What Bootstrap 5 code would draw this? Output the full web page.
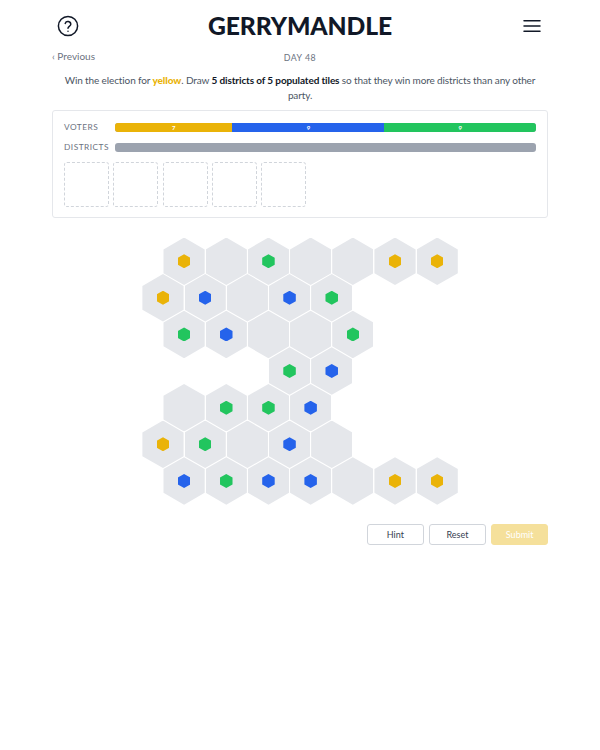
<!DOCTYPE html>
<html lang="en">
<head>
<meta charset="utf-8">
<title>Gerrymandle</title>
<link href="https://cdn.jsdelivr.net/npm/bootstrap@5.3.0/dist/css/bootstrap.min.css" rel="stylesheet">
<style>
body { font-family: Lato, "Noto Sans", sans-serif; color: #4b5563; background: #fff; }
.shell { width: 496px; margin: 0 auto; }
.top-bar { height: 46px; padding: 6px 4px 0 4px; }
.game-title { font-size: 24.7px; font-weight: 900; color: #111827; margin: 0; line-height: 40px; letter-spacing: -.1px; }
.sub-bar { height: 21px; font-size: 10px; position: relative; }
.prev-link { color: #6b7280; text-decoration: none; font-size: 10px; line-height: 20px; }
.day-label { position: absolute; left: 0; right: 0; text-align: center; top: 1.5px; font-size: 8.8px; letter-spacing: .5px; color: #6b7280; line-height: 20px; pointer-events: none; }
.intro { font-size: 10px; letter-spacing: -.12px; line-height: 14.5px; text-align: center; margin: 6px 0 8px; padding: 0 8px; color: #4b5563; }
.intro b { color: #111827; font-weight: 700; }
.intro strong { color: #eab308; font-weight: 900; }
.tally { border: 1px solid #e5e7eb; border-radius: 3px; padding: 12px 11px 11px; height: 108px; }
.tally-row { height: 9px; margin-bottom: 10.5px; }
.tally-label { width: 51px; flex: none; font-size: 8.3px; letter-spacing: .5px; color: #6b7280; line-height: 9px; }
.bar-track { flex: 1; height: 9px; border-radius: 3px; overflow: hidden; background: #9ca3af; display: flex; font-size: 6px; line-height: 9px; color: #fff; text-align: center; font-weight: 700; }
.seg-y { background: #eab308; }
.seg-b { background: #2563eb; }
.seg-g { background: #22c55e; }
.slots { gap: 4.3px; margin-top: -.5px; }
.slot { width: 45px; height: 45px; border: 1px dashed #d1d5db; border-radius: 3px; }
.board { margin-top: 19.5px; margin-left: 90.4px; }
.hex-row { display: flex; gap: 1px; height: 47.5px; margin-bottom: -10.9px; }
.hex-row.shifted { margin-left: 21.1px; }
.hex, .hex-gap { width: 41.2px; height: 47.5px; flex: none; }
.hex { background: #e5e7eb; clip-path: polygon(50% 0, 100% 25%, 100% 75%, 50% 100%, 0 75%, 0 25%); display: flex; align-items: center; justify-content: center; }
.pip { width: 12.5px; height: 14px; clip-path: polygon(50% 0, 100% 25%, 100% 75%, 50% 100%, 0 75%, 0 25%); }
.actions { margin-top: 30px; gap: 5.5px; }
.act-btn { width: 56.7px; height: 21px; padding: 0; font-size: 9px; line-height: 19px; border-radius: 3px; border: 1px solid #d1d5db; background: #fff; color: #374151; }
.act-btn.go { background: #f5e09b; border-color: #f5e09b; color: #fff; opacity: 1; }
</style>
</head>
<body>
<div class="shell">
  <header class="top-bar d-flex align-items-center justify-content-between">
    <svg width="24" height="24" viewBox="0 0 24 24" fill="none" stroke="#111827" stroke-width="1.5" stroke-linecap="round" stroke-linejoin="round" aria-label="Help"><circle cx="12" cy="12" r="9.6"/><path d="M9.2 9.4a2.9 2.9 0 0 1 5.6 .9c0 1.9-2.8 2.3-2.8 3.9"/><path d="M12 17.2v.1"/></svg>
    <h1 class="game-title">GERRYMANDLE</h1>
    <svg width="24" height="24" viewBox="0 0 24 24" fill="none" stroke="#111827" stroke-width="1.5" stroke-linecap="round" aria-label="Menu"><path d="M4 6.8h16M4 12h16M4 17.2h16"/></svg>
  </header>
  <div class="sub-bar d-flex">
    <a class="prev-link" href="#">‹ Previous</a>
    <div class="day-label">DAY 48</div>
  </div>
  <p class="intro">Win the election for <strong>yellow</strong>. Draw <b>5 districts of 5 populated tiles</b> so that they win more districts than any other party.</p>
  <section class="tally">
    <div class="tally-row d-flex align-items-center">
      <div class="tally-label">VOTERS</div>
      <div class="bar-track">
        <div class="seg-y" style="width:27.9%">7</div>
        <div class="seg-b" style="width:36.1%">9</div>
        <div class="seg-g" style="width:36%">9</div>
      </div>
    </div>
    <div class="tally-row d-flex align-items-center">
      <div class="tally-label">DISTRICTS</div>
      <div class="bar-track"></div>
    </div>
    <div class="slots d-flex">
      <div class="slot"></div><div class="slot"></div><div class="slot"></div><div class="slot"></div><div class="slot"></div>
    </div>
  </section>
  <div class="board">
    <div class="hex-row shifted">
      <div class="hex"><div class="pip seg-y"></div></div><div class="hex"></div><div class="hex"><div class="pip seg-g"></div></div><div class="hex"></div><div class="hex"></div><div class="hex"><div class="pip seg-y"></div></div><div class="hex"><div class="pip seg-y"></div></div>
    </div>
    <div class="hex-row">
      <div class="hex"><div class="pip seg-y"></div></div><div class="hex"><div class="pip seg-b"></div></div><div class="hex"></div><div class="hex"><div class="pip seg-b"></div></div><div class="hex"><div class="pip seg-g"></div></div>
    </div>
    <div class="hex-row shifted">
      <div class="hex"><div class="pip seg-g"></div></div><div class="hex"><div class="pip seg-b"></div></div><div class="hex"></div><div class="hex"></div><div class="hex"><div class="pip seg-g"></div></div>
    </div>
    <div class="hex-row">
      <div class="hex-gap"></div><div class="hex-gap"></div><div class="hex-gap"></div><div class="hex"><div class="pip seg-g"></div></div><div class="hex"><div class="pip seg-b"></div></div>
    </div>
    <div class="hex-row shifted">
      <div class="hex"></div><div class="hex"><div class="pip seg-g"></div></div><div class="hex"><div class="pip seg-g"></div></div><div class="hex"><div class="pip seg-b"></div></div>
    </div>
    <div class="hex-row">
      <div class="hex"><div class="pip seg-y"></div></div><div class="hex"><div class="pip seg-g"></div></div><div class="hex"></div><div class="hex"><div class="pip seg-b"></div></div><div class="hex"></div>
    </div>
    <div class="hex-row shifted">
      <div class="hex"><div class="pip seg-b"></div></div><div class="hex"><div class="pip seg-g"></div></div><div class="hex"><div class="pip seg-b"></div></div><div class="hex"><div class="pip seg-b"></div></div><div class="hex"></div><div class="hex"><div class="pip seg-y"></div></div><div class="hex"><div class="pip seg-y"></div></div>
    </div>
  </div>
  <div class="actions d-flex justify-content-end">
    <button type="button" class="btn act-btn">Hint</button>
    <button type="button" class="btn act-btn">Reset</button>
    <button type="button" class="btn act-btn go">Submit</button>
  </div>
</div>
<script src="https://cdn.jsdelivr.net/npm/bootstrap@5.3.0/dist/js/bootstrap.bundle.min.js"></script>
</body>
</html>
